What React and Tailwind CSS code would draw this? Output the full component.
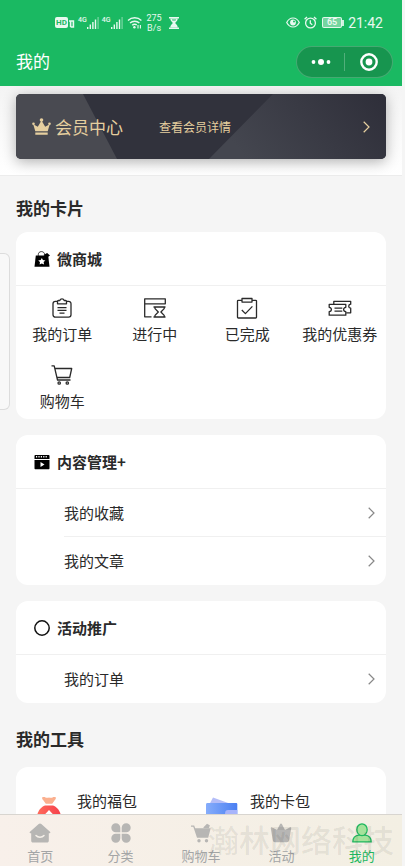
import React, { useState } from 'react';

const shopItems = [
  { label: '我的订单', icon: 'order' },
  { label: '进行中', icon: 'progress' },
  { label: '已完成', icon: 'done' },
  { label: '我的优惠券', icon: 'coupon' },
  { label: '购物车', icon: 'cart' },
];

const tabs = [
  { key: 'home', label: '首页' },
  { key: 'category', label: '分类' },
  { key: 'cart', label: '购物车' },
  { key: 'activity', label: '活动' },
  { key: 'mine', label: '我的' },
];

const Signal = () => (
  <div className="flex items-start">
    <span className="text-[7px] leading-[7px] font-medium">4G</span>
    <svg width="12" height="12" viewBox="0 0 12 12" fill="currentColor">
      <rect x="0" y="10" width="1.4" height="2" />
      <rect x="2.6" y="7.5" width="1.4" height="4.5" />
      <rect x="5.2" y="5" width="1.4" height="7" />
      <rect x="7.8" y="2.5" width="1.4" height="9.5" />
      <rect x="10.4" y="0" width="1.4" height="12" opacity="0.4" />
    </svg>
  </div>
);

const StatusBar = () => (
  <div className="flex h-[45px] items-center justify-between pr-[19px] pl-[55px] font-[Roboto,sans-serif] text-white/90">
    <div className="flex items-center gap-[3px]">
      <div className="flex items-end gap-px">
        <span className="flex h-[11px] w-[13px] items-center justify-center rounded-xs bg-white/90 text-[8px] leading-[11px] font-bold text-[#1ab962]">HD</span>
        <svg width="6" height="8" viewBox="0 0 6 8" fill="none" stroke="currentColor" strokeWidth="1.6">
          <path d="M0 1h1.600v6M1.600 1h2.800v6H1.600" />
        </svg>
      </div>
      <Signal />
      <Signal />
      <svg width="16" height="13" viewBox="0 0 16 13" fill="none" stroke="currentColor" strokeWidth="1.4" className="ml-px">
        <path d="M1 4.4a10 10 0 0 1 13.4 0M3 7a7 7 0 0 1 9.4 0M5.2 9.3a4 4 0 0 1 4.6-.5" />
        <circle cx="7.4" cy="11.2" r="1.2" fill="currentColor" stroke="none" />
        <path d="M11 9v3.4M13.4 9v3.4" strokeWidth="1.1" />
      </svg>
      <div className="ml-px flex flex-col items-center text-[9px] leading-[10px]">
        <span>275</span>
        <span>B/s</span>
      </div>
      <svg width="10" height="12" viewBox="0 0 10 12" fill="currentColor" className="ml-1">
        <path d="M0 0h10v1.6H0zM0 10.4h10V12H0z" />
        <path d="M1.3 1.5h7.4c0 2.2-1.4 3.2-2.6 4.5 1.2 1.3 2.6 2.300 2.600 4.500H1.300C1.300 8.300 2.700 7.300 3.900 6 2.700 4.700 1.300 3.700 1.300 1.500z" />
        <path d="M2.800 2.400h4.400L6.600 3.600H3.400z" fill="#1ab962" />
      </svg>
    </div>
    <div className="flex items-center gap-1">
      <svg width="14" height="11" viewBox="0 0 14 11" fill="none" stroke="currentColor" strokeWidth="1.2">
        <path d="M.7 5.500C2.200 2.600 4.400 1 7 1s4.800 1.600 6.300 4.500C11.800 8.400 9.600 10 7 10S2.200 8.400.700 5.500z" />
        <circle cx="7" cy="5.500" r="2.900" fill="currentColor" stroke="none" />
        <circle cx="8" cy="4.600" r="1" fill="#1ab962" stroke="none" />
      </svg>
      <svg width="13" height="13" viewBox="0 0 13 13" fill="none" stroke="currentColor" strokeWidth="1.300">
        <circle cx="6.500" cy="7" r="4.900" />
        <path d="M6.300 4.300V7.200l2 1.600M.600 3.300 3 1M12.400 3.300 10 1" />
      </svg>
      <div className="ml-px flex items-center">
        <span className="flex h-[11px] w-5 items-center justify-center rounded-xs border border-white/80 bg-white/40 text-[9px] leading-[9px] font-medium">65</span>
        <span className="h-[6px] w-[2px] bg-white/80" />
      </div>
      <span className="text-sm leading-5">21:42</span>
    </div>
  </div>
);

const TitleBar = () => (
  <div className="flex h-[41px] items-start justify-between pr-[9px] pl-4">
    <h1 className="pt-1 text-[17px] leading-6 text-white">我的</h1>
    <div className="mt-px flex h-8 w-[97px] items-center rounded-full border border-white/20 bg-[#17954f] text-white">
      <button type="button" aria-label="更多" className="flex h-full flex-1 items-center justify-center">
        <svg width="20" height="8" viewBox="0 0 20 8" fill="currentColor">
          <circle cx="2.500" cy="4" r="1.900" />
          <circle cx="10" cy="4" r="3" />
          <circle cx="17.500" cy="4" r="1.900" />
        </svg>
      </button>
      <span className="h-[18px] w-px bg-white/25" />
      <button type="button" aria-label="关闭" className="flex h-full flex-1 items-center justify-center">
        <svg width="18" height="18" viewBox="0 0 18 18" fill="none">
          <circle cx="9" cy="9" r="7.700" stroke="currentColor" strokeWidth="2.400" />
          <circle cx="9" cy="9" r="3.400" fill="currentColor" />
        </svg>
      </button>
    </div>
  </div>
);

const Chevron = ({ className }) => (
  <svg width="7" height="12" viewBox="0 0 7 12" fill="none" stroke="currentColor" strokeWidth="1.200" className={className}>
    <path d="M.700.800 6 6 .700 11.200" />
  </svg>
);

const MemberCard = () => (
  <section className="border-b border-[#ececec] bg-linear-to-b from-[#f4f4f4] to-white px-4 pt-2 pb-4">
    <a
      href="#member"
      className="relative flex h-[65px] items-center overflow-hidden rounded-[5px] bg-[#31323c] px-4 text-[#e6cf9f] shadow-[0_3px_14px_rgba(0,0,0,0.3)]"
    >
      <svg className="absolute inset-0 h-full w-full" viewBox="0 0 370 66" preserveAspectRatio="none">
        <defs>
          <linearGradient id="shineRight" x1="0" x2="1" y1="0.300" y2="0">
            <stop offset="0" stopColor="#44464f" />
            <stop offset="0.500" stopColor="#393a44" />
            <stop offset="1" stopColor="#2e2e39" />
          </linearGradient>
        </defs>
        <path d="M0 0h67l34 66H0z" fill="#494a51" />
        <path d="M257 0h113v66H193z" fill="url(#shineRight)" />
      </svg>
      <svg width="19" height="18" viewBox="0 0 19 18" fill="currentColor" className="relative">
        <path d="M3.300 13.200 1.200 6.300l4.600 2.500L9.500 2.500l3.700 6.300 4.600-2.500-2.100 6.900zM3.300 14.600h12.400v2.200H3.300z" />
        <circle cx="1.500" cy="5.800" r="1.300" />
        <circle cx="9.500" cy="2" r="1.800" />
        <circle cx="17.500" cy="5.800" r="1.300" />
      </svg>
      <span className="relative ml-1 w-[104px] text-[17px] leading-6">会员中心</span>
      <span className="relative flex-1 text-xs">查看会员详情</span>
      <Chevron className="relative" />
    </a>
  </section>
);

const ShopIcon = ({ name }) => {
  const icons = {
    order: (
      <>
        <path d="M5.500 3.300H3.400A2.400 2.400 0 0 0 1 5.700v11.100a2.400 2.400 0 0 0 2.400 2.400h13.200a2.400 2.400 0 0 0 2.400-2.400V5.700a2.400 2.400 0 0 0-2.400-2.400h-2.100" />
        <path d="M5.500 5.800V3.500c0-.700.400-1 1-1h1.300C8.200 1.300 9 .800 10 .800s1.800.500 2.200 1.700h1.300c.600 0 1 .300 1 1v2.300zM5.500 9.700h9M5.500 12.400h9M7.500 15.100h5" />
      </>
    ),
    progress: (
      <>
        <path d="M6.500 18.800H-.300V.800h20.600v5H-.300M8.500 9h12M8.500 19h12M10 9v1.600l3.300 3.400L10 17.400V19M19.200 9v1.600L15.900 14l3.300 3.400V19" />
      </>
    ),
    done: (
      <>
        <path d="M5 2.300H1.300a.800.800 0 0 0-.800.800v16.100c0 .500.300.800.800.800h17.400c.500 0 .800-.300.800-.800V3.100a.800.800 0 0 0-.800-.800H15" />
        <path d="M5 .500h10v3.600H5zM4.800 12l3.600 3.600 7-7.200" />
      </>
    ),
    coupon: (
      <>
        <path d="M-.800 6.300h16.600v3c-1.500.200-2.200 1-2.200 2.200s.700 2 2.200 2.200v3.500H-.800v-3.500c1.500-.200 2.200-1 2.200-2.200s-.700-2-2.200-2.200z" />
        <path d="M3.800 6V3.300h16.900v2.900c-1.400.200-2 1-2 2s.700 1.800 2 2v4.600h-4.500M4.500 10.100h7.800M4.500 13.200h7.800" />
      </>
    ),
    cart: (
      <>
        <path d="M-.500.800h2.700l3.300 14.200h13M2.800 3.500h16.900l-2 9H5" />
        <circle cx="7.200" cy="18" r="1.200" />
        <circle cx="15.300" cy="18" r="1.200" />
      </>
    ),
  };

  return (
    <svg width="20" height="20" viewBox="0 0 20 20" fill="none" stroke="currentColor" strokeWidth="1.300" strokeLinejoin="round" className="overflow-visible">
      {icons[name]}
    </svg>
  );
};

const CardHeader = ({ icon, title }) => (
  <div className="flex h-[54px] items-center gap-[7px] border-b border-[#f0f0f0] pl-[18px]">
    {icon}
    <h3 className="text-[15px] leading-5 font-bold">{title}</h3>
  </div>
);

const LinkRow = ({ label, divided }) => (
  <a href="#list" className="flex pl-12">
    <span className={`flex h-12 flex-1 items-center justify-between pr-[11px] ${divided ? 'border-b border-[#f0f0f0]' : ''}`}>
      <span className="text-[15px] leading-5">{label}</span>
      <Chevron className="text-[#888]" />
    </span>
  </a>
);

const BagIcon = () => (
  <svg width="16" height="16" viewBox="0 0 16 16">
    <path d="M1.800 4.500h12.400l1.300 11.300H.500z" />
    <path d="M4.300 5V3.500C4.300 1.800 5.600.600 7.400.600s3.200 1.200 3.200 2.900V5" fill="none" stroke="#333" strokeWidth="1" />
    <path d="m9.500 4 3.600-2 2.900 2.500-3 2z" />
    <path d="m7.800 6.900 1.100 2.200 2.500.300-1.800 1.700.500 2.500-2.300-1.200-2.200 1.200.400-2.500-1.800-1.700 2.500-.300z" fill="#fff" />
  </svg>
);

const VideoIcon = () => (
  <svg width="16" height="16" viewBox="0 0 16 16">
    <path d="M1.500 1h13c.600 0 1 .400 1 1v3H.500V2c0-.600.400-1 1-1zM.500 6h15v8.300c0 .600-.400 1-1 1h-13c-.600 0-1-.400-1-1z" />
    <path d="M2 2.800h12" stroke="#fff" strokeWidth="1.600" strokeDasharray="1.200 1.200" />
    <path d="m6.500 8 4 2.500-4 2.500z" fill="#fff" />
  </svg>
);

const CircleIcon = () => (
  <svg width="16" height="16" viewBox="0 0 16 16" fill="none" stroke="#111" strokeWidth="1.500">
    <circle cx="8" cy="8" r="7.200" />
  </svg>
);

const LuckyBagIcon = () => (
  <svg width="32" height="32" viewBox="0 0 32 32">
    <defs>
      <linearGradient id="luckyBag" x1="0" x2="1">
        <stop offset="0" stopColor="#ff6c5c" />
        <stop offset="1" stopColor="#f5404c" />
      </linearGradient>
    </defs>
    <path d="M9.500 0h2.200c1.500 1 2.800 1 4.300.500 1.500.500 2.800.500 4.300-.500h2.200c.800 1.200.200 2.300-.800 3.300L19.200 6.700h-6.400l-2.500-3.400c-1-1-1.600-2.100-.800-3.300z" fill="#fbb08f" />
    <path d="M12 8.500h8c4.500 1.500 8 6.500 8 12 0 7-3.500 11.500-12 11.500S4 27.500 4 20.500c0-5.500 3.500-10.500 8-12z" fill="url(#luckyBag)" />
    <path d="m16 13 5.500 6-5.500 6-5.500-6z" fill="#fff" />
  </svg>
);

const WalletIcon = () => (
  <svg width="32" height="32" viewBox="0 0 32 32">
    <defs>
      <linearGradient id="wallet" x1="0" x2="1">
        <stop offset="0" stopColor="#86adfb" />
        <stop offset="1" stopColor="#4a7ff2" />
      </linearGradient>
    </defs>
    <path d="m7 .500 16.500 6L20 16 2 10z" fill="#b4bdf8" />
    <path d="M0 7.500C0 6.500.600 6 1.500 6H30c.800 0 1.300.500 1.300 1.300V28c0 1.200-.800 2-2 2H2c-1.200 0-2-.800-2-2z" fill="url(#wallet)" />
    <path d="M22 13h9.300v9H22c-2.500 0-3-1.800-3-4.500s.500-4.500 3-4.500z" fill="#a7b4fb" />
  </svg>
);

const TabIcon = ({ name }) => {
  const icons = {
    home: (
      <>
        <path d="M10 .600c.500 0 .900.200 1.300.500l8.700 7.700c.700.700.400 1.500-.500 1.500h-.700v7.500c0 1.100-.700 1.800-1.800 1.800H3c-1.100 0-1.800-.700-1.800-1.800v-7.500H.500c-.900 0-1.200-.800-.500-1.500l8.700-7.700c.400-.300.800-.500 1.300-.500z" />
        <path d="M6 12.500c2 2.300 6 2.300 8 0" fill="none" stroke="#f5f0e9" strokeWidth="1.500" strokeLinecap="round" />
      </>
    ),
    category: (
      <path d="M4.800.300a4.500 4.500 0 0 1 4.500 4.500v4.500H4.800a4.500 4.500 0 0 1 0-9zM15.200.300a4.500 4.500 0 0 1 0 9h-4.500V4.800A4.500 4.500 0 0 1 15.200.300zM4.800 10.700h4.500v4.500a4.500 4.500 0 1 1-4.500-4.500zM10.700 10.700h4.500a4.500 4.500 0 1 1-4.500 4.500z" />
    ),
    cart: (
      <>
        <path d="M0 2.500h3.200l1 2.700h15.500l-2.500 9.600H6L2.300 3.800H0z" />
        <path d="M12.500 4.200 16 .800l2.800 1.400-.8 3h-5.500z" />
        <circle cx="8" cy="17.800" r="1.700" />
        <circle cx="15.500" cy="17.800" r="1.700" />
      </>
    ),
    activity: (
      <path d="M10 .500c.400 0 .800.300 1 .700L14 7l4.700-2.600c1-.500 1.800.100 1.500 1.200l-2 11.700c-.200 1.200-1 2-2.200 2H4c-1.200 0-2-.800-2.200-2L-.200 5.600C-.500 4.500.300 3.900 1.300 4.400L6 7l3-5.800c.200-.400.600-.700 1-.700z" />
    ),
    mine: (
      <g fill="#a5e29b" stroke="#1fb85f" strokeWidth="1.300">
        <path d="M.800 18.900c0-3.800 2.400-6.300 6.200-6.700h6c3.800.400 6.200 2.900 6.200 6.700z" strokeLinejoin="round" />
        <ellipse cx="10" cy="6.700" rx="5.200" ry="5.900" />
      </g>
    ),
  };

  return (
    <svg width="20" height="20" viewBox="0 0 20 20" fill="#b7b6b4" className="overflow-visible">
      {icons[name]}
    </svg>
  );
};

const TabBar = ({ active, onChange }) => (
  <nav className="relative grid h-[52px] shrink-0 grid-cols-5 border-t border-[#d8d5d0] bg-linear-to-r from-[#f8f0ea] to-[#f3efe3]">
    {tabs.map((tab) => (
      <button
        key={tab.key}
        type="button"
        onClick={() => onChange(tab.key)}
        className={`flex flex-col items-center gap-[3px] pt-2 text-[13px] leading-5 ${active === tab.key ? 'text-[#1fb85f]' : 'text-[#a3a5a6]'}`}
      >
        <TabIcon name={tab.key} />
        {tab.label}
      </button>
    ))}
    <span className="pointer-events-none absolute top-0 right-2 text-[31px] leading-[48px] font-medium whitespace-nowrap text-black/8">
      瀚林网络科技
    </span>
  </nav>
);

const App = () => {
  const [activeTab, setActiveTab] = useState('mine');

  return (
    <div className="relative flex h-screen flex-col overflow-hidden bg-[#f5f5f5] pr-[3px] font-['Noto_Sans_CJK_SC',sans-serif] text-[#2a2a2a]">
      <header className="shrink-0 bg-[#1ab962]">
        <StatusBar />
        <TitleBar />
      </header>

      <main className="min-h-0 flex-1 overflow-hidden">
        <MemberCard />

        <section className="px-4">
          <h2 className="pt-5 pb-3 text-[17px] leading-6 font-bold">我的卡片</h2>
          <div className="flex flex-col gap-4">
            <div className="rounded-xl bg-white">
              <CardHeader icon={<BagIcon />} title="微商城" />
              <div className="grid grid-cols-4 gap-y-[21px] pt-3 pb-2">
                {shopItems.map((item) => (
                  <button key={item.label} type="button" className="flex flex-col items-center gap-[6px] text-[15px] leading-5 whitespace-nowrap">
                    <ShopIcon name={item.icon} />
                    {item.label}
                  </button>
                ))}
              </div>
            </div>

            <div className="rounded-xl bg-white">
              <CardHeader icon={<VideoIcon />} title="内容管理+" />
              <LinkRow label="我的收藏" divided />
              <LinkRow label="我的文章" />
            </div>

            <div className="rounded-xl bg-white">
              <CardHeader icon={<CircleIcon />} title="活动推广" />
              <LinkRow label="我的订单" />
            </div>
          </div>
        </section>

        <section className="mt-1 px-4">
          <h2 className="pt-5 pb-3 text-[17px] leading-6 font-bold">我的工具</h2>
          <div className="mt-1 grid grid-cols-2 rounded-xl bg-white px-3 pt-6 pb-6">
            <a href="#lucky" className="flex h-11 items-center gap-3 pl-[5px]">
              <LuckyBagIcon />
              <span className="h-full text-[15px] leading-5">我的福包</span>
            </a>
            <a href="#wallet" className="flex h-11 items-center gap-3 pl-[5px]">
              <WalletIcon />
              <span className="h-full text-[15px] leading-5">我的卡包</span>
            </a>
          </div>
        </section>
      </main>

      <TabBar active={activeTab} onChange={setActiveTab} />

      {/* collapsed side drawer handle */}
      <div className="absolute top-[253px] left-0 h-[157px] w-[10px] rounded-r-md border border-l-0 border-[#dcdcdc] bg-[#f8f8f8]" />
    </div>
  );
};

export default App;
